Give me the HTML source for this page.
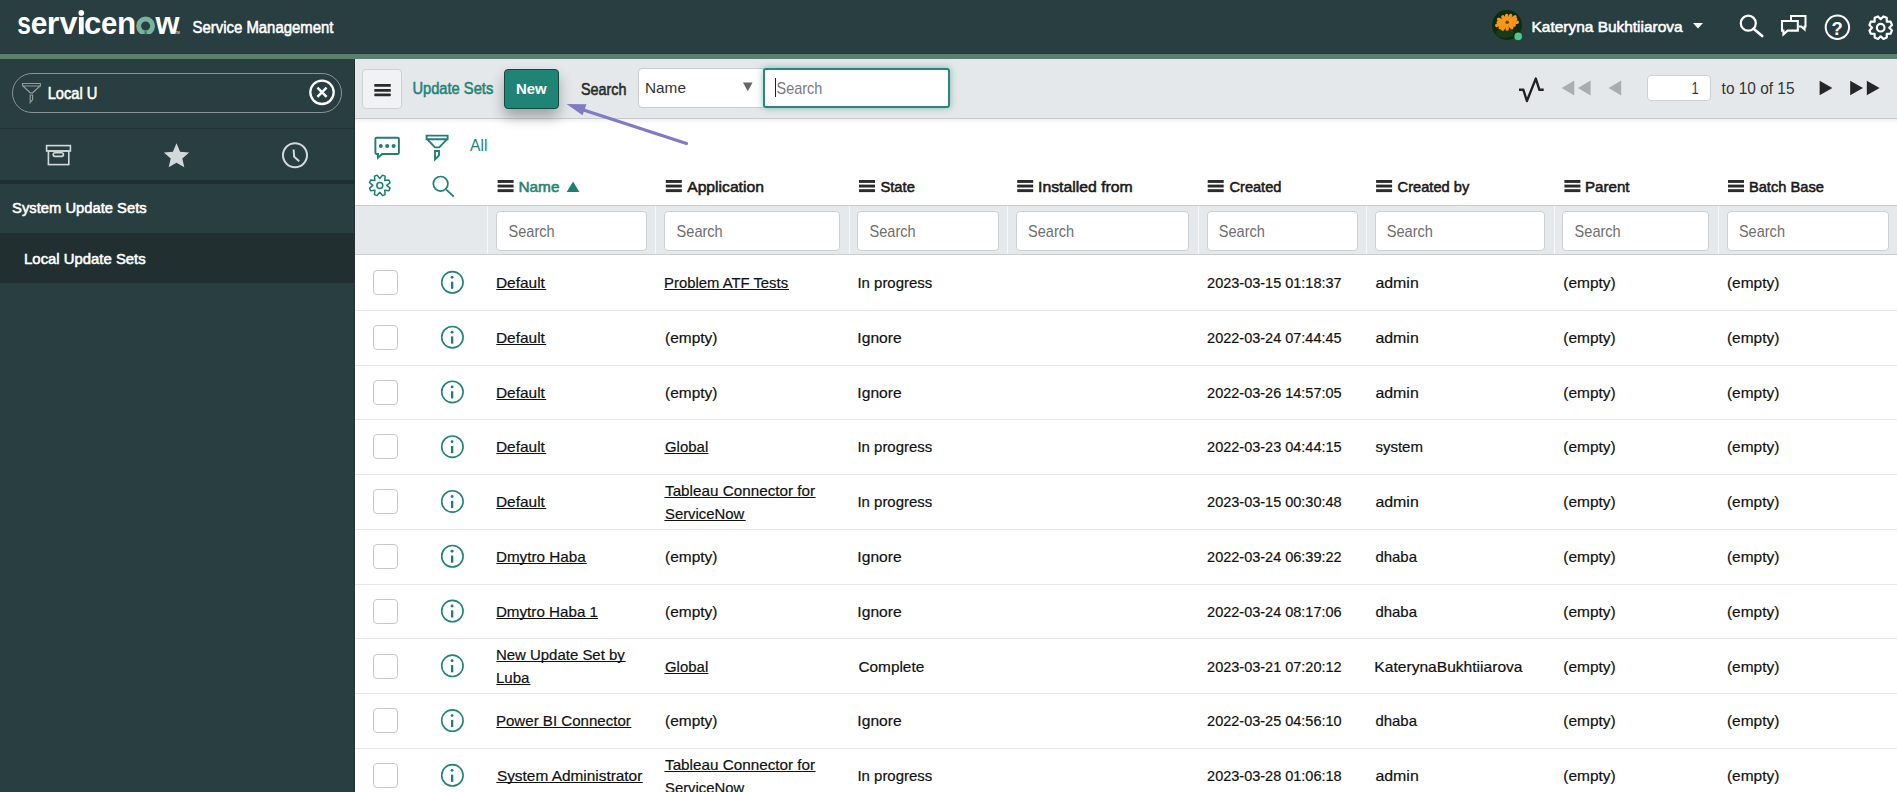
<!DOCTYPE html>
<html><head><meta charset="utf-8"><title>Update Sets | ServiceNow</title>
<style>
html,body{margin:0;padding:0;}
body{width:1897px;height:792px;overflow:hidden;position:relative;background:#fff;font-family:"Liberation Sans",sans-serif;}
.a{position:absolute;box-sizing:border-box;}
svg.txt,svg.ico{position:absolute;left:0;top:0;font-family:"Liberation Sans",sans-serif;}

</style></head>
<body>
<header>
<div class="a" style="left:0px;top:0px;width:1897px;height:54px;background:#293e40"></div>
<div class="a" style="left:0px;top:53px;width:1897px;height:1px;background:#253739"></div>
<div class="a" style="left:0px;top:54px;width:1897px;height:5px;background:#5b8070"></div>
</header>
<nav>
<div class="a" style="left:0px;top:59px;width:355px;height:733px;background:#293e40"></div>
<div class="a" style="left:354px;top:59px;width:1px;height:733px;background:#223234"></div>
<div class="a" style="left:12px;top:73px;width:330px;height:40px;border:1px solid #8a9496;border-radius:20px"></div>
<div class="a" style="left:0px;top:128px;width:355px;height:1px;background:#223335"></div>
<div class="a" style="left:0px;top:180px;width:355px;height:4px;background:#1f2e30"></div>
<div class="a" style="left:0px;top:233px;width:355px;height:50px;background:#212f31"></div>
</nav>
<main>
<div class="a" style="left:355px;top:59px;width:1542px;height:59px;background:#e4e8eb"></div>
<div class="a" style="left:355px;top:118px;width:1542px;height:1px;background:#c8c9ca"></div>
<div class="a" style="left:355px;top:119px;width:1542px;height:5px;background:linear-gradient(#f2f2f2,#ffffff)"></div>
<div class="a" style="left:362px;top:69px;width:40px;height:40px;background:#f1f2f4;border:1px solid #cdd1d4;border-radius:4px"></div>
<div class="a" style="left:504px;top:69px;width:55px;height:40px;background:#1f8476;border:1px solid #15493f;border-radius:4px;box-shadow:0 8px 14px rgba(0,0,0,.3)"></div>
<div class="a" style="left:638px;top:68px;width:126px;height:40px;background:#fff;border:1px solid #c8ccd0;border-radius:4px 0 0 4px"></div>
<div class="a" style="left:763px;top:68px;width:187px;height:40px;background:#fff;border:2px solid #28897b;border-radius:3px;box-shadow:0 0 7px rgba(31,132,118,.5)"></div>
<div class="a" style="left:775px;top:78px;width:1px;height:19px;background:#222"></div>
<div class="a" style="left:1647px;top:75px;width:64px;height:26px;background:#fff;border:1px solid #cdd1d4;border-radius:4px"></div>
<div class="a" style="left:355px;top:205px;width:1542px;height:1px;background:#c8ccd0"></div>
<div class="a" style="left:355px;top:206px;width:1542px;height:48px;background:#e6e9eb"></div>
<div class="a" style="left:355px;top:254px;width:1542px;height:1px;background:#c8ccd0"></div>
<div class="a" style="left:487.0px;top:206px;width:1px;height:48px;background:#f7f8f9"></div>
<div class="a" style="left:655.0px;top:206px;width:1px;height:48px;background:#f7f8f9"></div>
<div class="a" style="left:849.0px;top:206px;width:1px;height:48px;background:#f7f8f9"></div>
<div class="a" style="left:1007.0px;top:206px;width:1px;height:48px;background:#f7f8f9"></div>
<div class="a" style="left:1198.0px;top:206px;width:1px;height:48px;background:#f7f8f9"></div>
<div class="a" style="left:1365.5px;top:206px;width:1px;height:48px;background:#f7f8f9"></div>
<div class="a" style="left:1554.0px;top:206px;width:1px;height:48px;background:#f7f8f9"></div>
<div class="a" style="left:1717.5px;top:206px;width:1px;height:48px;background:#f7f8f9"></div>
<div class="a" style="left:496.3px;top:211px;width:151.09999999999997px;height:40px;background:#fff;border:1px solid #cdd0d3;border-radius:4px"></div>
<div class="a" style="left:664.4px;top:211px;width:175.89999999999998px;height:40px;background:#fff;border:1px solid #cdd0d3;border-radius:4px"></div>
<div class="a" style="left:857.3px;top:211px;width:141.30000000000007px;height:40px;background:#fff;border:1px solid #cdd0d3;border-radius:4px"></div>
<div class="a" style="left:1015.8px;top:211px;width:173.29999999999995px;height:40px;background:#fff;border:1px solid #cdd0d3;border-radius:4px"></div>
<div class="a" style="left:1206.6px;top:211px;width:151.10000000000014px;height:40px;background:#fff;border:1px solid #cdd0d3;border-radius:4px"></div>
<div class="a" style="left:1374.6px;top:211px;width:170.70000000000005px;height:40px;background:#fff;border:1px solid #cdd0d3;border-radius:4px"></div>
<div class="a" style="left:1562.4px;top:211px;width:146.89999999999986px;height:40px;background:#fff;border:1px solid #cdd0d3;border-radius:4px"></div>
<div class="a" style="left:1726.7px;top:211px;width:162.5999999999999px;height:40px;background:#fff;border:1px solid #cdd0d3;border-radius:4px"></div>
<div class="a" style="left:355px;top:309.78px;width:1542px;height:1px;background:#e8e8e8"></div>
<div class="a" style="left:355px;top:364.56px;width:1542px;height:1px;background:#e8e8e8"></div>
<div class="a" style="left:355px;top:419.34px;width:1542px;height:1px;background:#e8e8e8"></div>
<div class="a" style="left:355px;top:474.12px;width:1542px;height:1px;background:#e8e8e8"></div>
<div class="a" style="left:355px;top:528.9px;width:1542px;height:1px;background:#e8e8e8"></div>
<div class="a" style="left:355px;top:583.68px;width:1542px;height:1px;background:#e8e8e8"></div>
<div class="a" style="left:355px;top:638.46px;width:1542px;height:1px;background:#e8e8e8"></div>
<div class="a" style="left:355px;top:693.24px;width:1542px;height:1px;background:#e8e8e8"></div>
<div class="a" style="left:355px;top:748.02px;width:1542px;height:1px;background:#e8e8e8"></div>
<div class="a" style="left:373px;top:270.0px;width:25px;height:25px;border:1.5px solid #c9c9c9;border-radius:4px;background:#fff"></div>
<div class="a" style="left:373px;top:324.8px;width:25px;height:25px;border:1.5px solid #c9c9c9;border-radius:4px;background:#fff"></div>
<div class="a" style="left:373px;top:379.6px;width:25px;height:25px;border:1.5px solid #c9c9c9;border-radius:4px;background:#fff"></div>
<div class="a" style="left:373px;top:434.3px;width:25px;height:25px;border:1.5px solid #c9c9c9;border-radius:4px;background:#fff"></div>
<div class="a" style="left:373px;top:489.1px;width:25px;height:25px;border:1.5px solid #c9c9c9;border-radius:4px;background:#fff"></div>
<div class="a" style="left:373px;top:543.9px;width:25px;height:25px;border:1.5px solid #c9c9c9;border-radius:4px;background:#fff"></div>
<div class="a" style="left:373px;top:598.7px;width:25px;height:25px;border:1.5px solid #c9c9c9;border-radius:4px;background:#fff"></div>
<div class="a" style="left:373px;top:653.5px;width:25px;height:25px;border:1.5px solid #c9c9c9;border-radius:4px;background:#fff"></div>
<div class="a" style="left:373px;top:708.2px;width:25px;height:25px;border:1.5px solid #c9c9c9;border-radius:4px;background:#fff"></div>
<div class="a" style="left:373px;top:763.0px;width:25px;height:25px;border:1.5px solid #c9c9c9;border-radius:4px;background:#fff"></div>
</main>
<svg class="ico" width="1897" height="792" viewBox="0 0 1897 792">
<defs><clipPath id="oc"><rect x="130" y="10" width="30" height="24.1"/></clipPath></defs>
<circle cx="145.6" cy="26.0" r="6.95" fill="none" stroke="#78b39d" stroke-width="4.9" clip-path="url(#oc)"/>
<rect x="144.4" y="31.2" width="2.4" height="3" fill="#4a7868"/>
<rect x="78.9" y="17.1" width="4.8" height="17" fill="#fff"/>
<circle cx="81.3" cy="12.9" r="2.8" fill="#fff"/>
<text x="175.5" y="34" font-size="3" fill="#fff">TM</text>
<defs><clipPath id="av"><circle cx="1507" cy="25" r="15"/></clipPath></defs>
<circle cx="1507" cy="25" r="14.9" fill="#0e2b10"/>
<g clip-path="url(#av)">
<ellipse cx="1505" cy="33" rx="9" ry="5" fill="#163d17"/>
<line x1="1507" y1="22.3" x2="1517.3" y2="22.2" stroke="#f7961c" stroke-width="3.4" stroke-linecap="round"/>
<line x1="1507" y1="22.3" x2="1514.2" y2="25.2" stroke="#f7961c" stroke-width="3.4" stroke-linecap="round"/>
<line x1="1507" y1="22.3" x2="1511.8" y2="27.7" stroke="#f7961c" stroke-width="3.4" stroke-linecap="round"/>
<line x1="1507" y1="22.3" x2="1507.2" y2="29.1" stroke="#f7961c" stroke-width="3.4" stroke-linecap="round"/>
<line x1="1507" y1="22.3" x2="1502.7" y2="29.1" stroke="#f7961c" stroke-width="3.4" stroke-linecap="round"/>
<line x1="1507" y1="22.3" x2="1500.1" y2="27.8" stroke="#f7961c" stroke-width="3.4" stroke-linecap="round"/>
<line x1="1507" y1="22.3" x2="1496.8" y2="25.4" stroke="#f7961c" stroke-width="3.4" stroke-linecap="round"/>
<line x1="1507" y1="22.3" x2="1498.2" y2="22.4" stroke="#f7961c" stroke-width="3.4" stroke-linecap="round"/>
<line x1="1507" y1="22.3" x2="1498.6" y2="19.4" stroke="#f7961c" stroke-width="3.4" stroke-linecap="round"/>
<line x1="1507" y1="22.3" x2="1502.9" y2="16.9" stroke="#f7961c" stroke-width="3.4" stroke-linecap="round"/>
<line x1="1507" y1="22.3" x2="1506.7" y2="15.5" stroke="#f7961c" stroke-width="3.4" stroke-linecap="round"/>
<line x1="1507" y1="22.3" x2="1510.7" y2="15.5" stroke="#f7961c" stroke-width="3.4" stroke-linecap="round"/>
<line x1="1507" y1="22.3" x2="1515.0" y2="16.8" stroke="#f7961c" stroke-width="3.4" stroke-linecap="round"/>
<line x1="1507" y1="22.3" x2="1515.7" y2="19.2" stroke="#f7961c" stroke-width="3.4" stroke-linecap="round"/>
<circle cx="1507" cy="22.3" r="4" fill="#f59a12"/>
<circle cx="1507.2" cy="22.3" r="1.8" fill="#7a3a0c"/>
</g>
<circle cx="1518.2" cy="36.4" r="3.8" fill="#4fc58a"/>
<polygon points="1693,23 1703,23 1698,28.5" fill="#fff"/>
<g fill="none" stroke="#fff" stroke-width="2">
<circle cx="1748.3" cy="23.2" r="7.5" stroke-width="2.2"/>
<line x1="1753.6" y1="28.8" x2="1762.2" y2="36.0" stroke-width="2.7" stroke-linecap="round"/>
<path d="M1791 20 V16 H1805.5 V26.5 H1804.6 V29.6 L1801.2 26.5 H1799"/>
<path d="M1782 21 H1797.8 V30.6 H1787.6 L1783.4 34.4 V30.6 H1782 Z" stroke-width="2.1"/>
<circle cx="1837.4" cy="27.3" r="11.7"/>
</g>
<text x="1831.6" y="34.6" font-size="18.5" font-weight="bold" fill="#fff">?</text>
<polygon points="1880.70,19.10 1883.41,16.42 1886.76,17.81 1886.78,21.62 1890.59,21.64 1891.98,24.99 1889.30,27.70 1891.98,30.41 1890.59,33.76 1886.78,33.78 1886.76,37.59 1883.41,38.98 1880.70,36.30 1877.99,38.98 1874.64,37.59 1874.62,33.78 1870.81,33.76 1869.42,30.41 1872.10,27.70 1869.42,24.99 1870.81,21.64 1874.62,21.62 1874.64,17.81 1877.99,16.42" fill="none" stroke="#fff" stroke-width="2.2" stroke-linejoin="round"/><circle cx="1880.7" cy="27.7" r="3.8" fill="none" stroke="#fff" stroke-width="2.2"/>
<g fill="none" stroke="#d3d8da" stroke-width="1.6">
<rect x="46.6" y="145.6" width="23.8" height="5.4"/>
<rect x="48.4" y="151" width="20.4" height="13.6"/>
<rect x="53.2" y="152.8" width="10.2" height="3.6" rx="1.8"/>
<circle cx="295" cy="155.3" r="12" stroke-width="2"/>
<polyline points="293.6,149.5 294.2,156.8 299.2,161.2" stroke-width="2"/>
</g>
<polygon points="176.50,143.30 180.09,151.66 189.15,152.49 182.30,158.49 184.32,167.36 176.50,162.70 168.68,167.36 170.70,158.49 163.85,152.49 172.91,151.66" fill="#d3d8da"/>
<g fill="none" stroke="#8f9a9c" stroke-width="1.2">
<path d="M22.6 83.5 H40.4 V86 H22.6 Z M23 86 L30.2 92.8 H32.6 L40 86"/>
<path d="M30.2 95 H32.6 V99.6 L30.2 102.6 Z"/>
</g>
<circle cx="322" cy="92.3" r="11.7" fill="none" stroke="#fff" stroke-width="2.3"/>
<path d="M317.4 87.7 L326.6 96.9 M326.6 87.7 L317.4 96.9" stroke="#fff" stroke-width="2.5"/>
<g fill="#2b2b2b"><rect x="374.3" y="84" width="16.5" height="2.8" rx="0.6"/><rect x="374.3" y="89" width="16.5" height="2.8" rx="0.6"/><rect x="374.3" y="93.4" width="16.5" height="2.8" rx="0.6"/></g>
<line x1="686.5" y1="143.5" x2="579" y2="108.6" stroke="#7f7bc4" stroke-width="3.2" stroke-linecap="round"/>
<polygon points="566.5,104 586.5,104.3 582.5,115.3" fill="#7f7bc4"/>
<polygon points="743,82.6 752.6,82.6 747.8,91.3" fill="#666"/>
<polyline points="1519,89.8 1523.4,89.8 1526.9,101 1535.8,78.6 1539.4,89.8 1543.7,89.8" fill="none" stroke="#222" stroke-width="2.4" stroke-linejoin="round"/>
<g fill="#a9adb0">
<polygon points="1561.7,88 1574.3,80.6 1574.3,95.4"/>
<polygon points="1578.0,88 1590.6,80.6 1590.6,95.4"/>
<polygon points="1608.6,88 1621.1999999999998,80.6 1621.1999999999998,95.4"/>
</g><g fill="#262626">
<polygon points="1819.6,80.8 1832.3999999999999,88 1819.6,95.3"/>
<polygon points="1850.2,80.8 1863.0,88 1850.2,95.3"/>
<polygon points="1866.8,80.8 1879.6,88 1866.8,95.3"/>
</g>
<g fill="none" stroke="#1f7f73" stroke-width="1.9">
<path d="M376.5 137.8 H397.8 Q398.9 137.8 398.9 139 V152.8 Q398.9 154 397.8 154 H382.2 L378 157.6 V154 H376.5 Q375.4 154 375.4 152.8 V139 Q375.4 137.8 376.5 137.8 Z"/>
<path d="M426.6 135.6 H447.6 V139.2 H426.6 Z M427 139.2 L435 147.4 H439.2 L447.2 139.2"/>
<path d="M435 151 H439 V155.4 L435 159.4 Z"/>
<circle cx="440.6" cy="183.8" r="7.3" stroke-width="1.7"/>
<line x1="446.2" y1="189.6" x2="453.8" y2="196.6" stroke-width="1.9"/>
</g>
<g fill="#1f7f73"><circle cx="380.8" cy="145.9" r="2"/><circle cx="387.2" cy="145.9" r="2"/><circle cx="393.6" cy="145.9" r="2"/></g>
<polygon points="379.80,178.50 382.52,175.15 385.12,176.23 384.68,180.52 388.97,180.08 390.05,182.68 386.70,185.40 390.05,188.12 388.97,190.72 384.68,190.28 385.12,194.57 382.52,195.65 379.80,192.30 377.08,195.65 374.48,194.57 374.92,190.28 370.63,190.72 369.55,188.12 372.90,185.40 369.55,182.68 370.63,180.08 374.92,180.52 374.48,176.23 377.08,175.15" fill="none" stroke="#1f7f73" stroke-width="1.5" stroke-linejoin="round"/><circle cx="379.8" cy="185.4" r="3.0" fill="none" stroke="#1f7f73" stroke-width="1.5"/>
<g fill="#2b2b2b">
<rect x="497.6" y="180" width="16" height="2.9"/><rect x="497.6" y="184.6" width="16" height="2.9"/><rect x="497.6" y="189.2" width="16" height="2.9"/>
<rect x="665.8" y="180" width="16" height="2.9"/><rect x="665.8" y="184.6" width="16" height="2.9"/><rect x="665.8" y="189.2" width="16" height="2.9"/>
<rect x="859.0" y="180" width="16" height="2.9"/><rect x="859.0" y="184.6" width="16" height="2.9"/><rect x="859.0" y="189.2" width="16" height="2.9"/>
<rect x="1017.2" y="180" width="16" height="2.9"/><rect x="1017.2" y="184.6" width="16" height="2.9"/><rect x="1017.2" y="189.2" width="16" height="2.9"/>
<rect x="1207.7" y="180" width="16" height="2.9"/><rect x="1207.7" y="184.6" width="16" height="2.9"/><rect x="1207.7" y="189.2" width="16" height="2.9"/>
<rect x="1376.1" y="180" width="16" height="2.9"/><rect x="1376.1" y="184.6" width="16" height="2.9"/><rect x="1376.1" y="189.2" width="16" height="2.9"/>
<rect x="1564.4" y="180" width="16" height="2.9"/><rect x="1564.4" y="184.6" width="16" height="2.9"/><rect x="1564.4" y="189.2" width="16" height="2.9"/>
<rect x="1728.0" y="180" width="16" height="2.9"/><rect x="1728.0" y="184.6" width="16" height="2.9"/><rect x="1728.0" y="189.2" width="16" height="2.9"/>
</g>
<polygon points="566.7,191.9 579.4,191.9 573.05,181.5" fill="#1f7f73"/>
<circle cx="452.4" cy="282.35" r="10.7" fill="none" stroke="#1f8476" stroke-width="1.6"/>
<circle cx="452.1" cy="277.35" r="1.45" fill="#1f7f73"/>
<rect x="451.0" y="281.65" width="2.3" height="7.2" fill="#1f7f73"/>
<circle cx="452.4" cy="337.13" r="10.7" fill="none" stroke="#1f8476" stroke-width="1.6"/>
<circle cx="452.1" cy="332.13" r="1.45" fill="#1f7f73"/>
<rect x="451.0" y="336.43" width="2.3" height="7.2" fill="#1f7f73"/>
<circle cx="452.4" cy="391.91" r="10.7" fill="none" stroke="#1f8476" stroke-width="1.6"/>
<circle cx="452.1" cy="386.91" r="1.45" fill="#1f7f73"/>
<rect x="451.0" y="391.21" width="2.3" height="7.2" fill="#1f7f73"/>
<circle cx="452.4" cy="446.69" r="10.7" fill="none" stroke="#1f8476" stroke-width="1.6"/>
<circle cx="452.1" cy="441.69" r="1.45" fill="#1f7f73"/>
<rect x="451.0" y="445.99" width="2.3" height="7.2" fill="#1f7f73"/>
<circle cx="452.4" cy="501.47" r="10.7" fill="none" stroke="#1f8476" stroke-width="1.6"/>
<circle cx="452.1" cy="496.47" r="1.45" fill="#1f7f73"/>
<rect x="451.0" y="500.77" width="2.3" height="7.2" fill="#1f7f73"/>
<circle cx="452.4" cy="556.25" r="10.7" fill="none" stroke="#1f8476" stroke-width="1.6"/>
<circle cx="452.1" cy="551.25" r="1.45" fill="#1f7f73"/>
<rect x="451.0" y="555.55" width="2.3" height="7.2" fill="#1f7f73"/>
<circle cx="452.4" cy="611.03" r="10.7" fill="none" stroke="#1f8476" stroke-width="1.6"/>
<circle cx="452.1" cy="606.03" r="1.45" fill="#1f7f73"/>
<rect x="451.0" y="610.33" width="2.3" height="7.2" fill="#1f7f73"/>
<circle cx="452.4" cy="665.81" r="10.7" fill="none" stroke="#1f8476" stroke-width="1.6"/>
<circle cx="452.1" cy="660.81" r="1.45" fill="#1f7f73"/>
<rect x="451.0" y="665.11" width="2.3" height="7.2" fill="#1f7f73"/>
<circle cx="452.4" cy="720.59" r="10.7" fill="none" stroke="#1f8476" stroke-width="1.6"/>
<circle cx="452.1" cy="715.59" r="1.45" fill="#1f7f73"/>
<rect x="451.0" y="719.89" width="2.3" height="7.2" fill="#1f7f73"/>
<circle cx="452.4" cy="775.37" r="10.7" fill="none" stroke="#1f8476" stroke-width="1.6"/>
<circle cx="452.1" cy="770.37" r="1.45" fill="#1f7f73"/>
<rect x="451.0" y="774.67" width="2.3" height="7.2" fill="#1f7f73"/>
</svg>
<svg class="txt" width="1897" height="792" viewBox="0 0 1897 792">
<text x="17.21" y="33.90" font-size="31.40" font-weight="bold" fill="#ffffff" textLength="13.74" lengthAdjust="spacingAndGlyphs">s</text>
<text x="30.64" y="33.90" font-size="31.40" font-weight="bold" fill="#ffffff" textLength="16.69" lengthAdjust="spacingAndGlyphs">e</text>
<text x="46.74" y="33.90" font-size="31.40" font-weight="bold" fill="#ffffff" textLength="12.58" lengthAdjust="spacingAndGlyphs">r</text>
<text x="59.50" y="33.90" font-size="31.40" font-weight="bold" fill="#ffffff" textLength="18.03" lengthAdjust="spacingAndGlyphs">v</text>
<text x="84.11" y="33.90" font-size="31.40" font-weight="bold" fill="#ffffff" textLength="17.34" lengthAdjust="spacingAndGlyphs">c</text>
<text x="101.06" y="33.90" font-size="31.40" font-weight="bold" fill="#ffffff" textLength="16.36" lengthAdjust="spacingAndGlyphs">e</text>
<text x="117.00" y="33.90" font-size="31.40" font-weight="bold" fill="#ffffff" textLength="19.17" lengthAdjust="spacingAndGlyphs">n</text>
<text x="155.38" y="33.90" font-size="31.40" font-weight="bold" fill="#ffffff" textLength="23.94" lengthAdjust="spacingAndGlyphs">w</text>
<text x="192.50" y="32.80" font-size="16.28" font-weight="normal" fill="#ffffff" textLength="140.99" lengthAdjust="spacingAndGlyphs" stroke="#ffffff" stroke-width="0.55">Service Management</text>
<text x="1531.58" y="31.80" font-size="15.41" font-weight="normal" fill="#ffffff" textLength="151.02" lengthAdjust="spacingAndGlyphs" stroke="#ffffff" stroke-width="0.55">Kateryna Bukhtiiarova</text>
<text x="47.64" y="98.90" font-size="15.99" font-weight="normal" fill="#ffffff" textLength="49.82" lengthAdjust="spacingAndGlyphs" stroke="#ffffff" stroke-width="0.55">Local U</text>
<text x="12.10" y="212.60" font-size="15.26" font-weight="normal" fill="#ffffff" textLength="134.54" lengthAdjust="spacingAndGlyphs" stroke="#ffffff" stroke-width="0.55">System Update Sets</text>
<text x="24.09" y="263.60" font-size="15.41" font-weight="normal" fill="#ffffff" textLength="121.62" lengthAdjust="spacingAndGlyphs" stroke="#ffffff" stroke-width="0.55">Local Update Sets</text>
<text x="412.40" y="94.20" font-size="15.99" font-weight="normal" fill="#1f8476" textLength="80.90" lengthAdjust="spacingAndGlyphs" stroke="#1f8476" stroke-width="0.55">Update Sets</text>
<text x="516.02" y="93.90" font-size="15.26" font-weight="bold" fill="#ffffff" textLength="30.64" lengthAdjust="spacingAndGlyphs">New</text>
<text x="581.00" y="94.80" font-size="15.70" font-weight="normal" fill="#2b2b2b" textLength="45.51" lengthAdjust="spacingAndGlyphs" stroke="#2b2b2b" stroke-width="0.55">Search</text>
<text x="645.01" y="93.00" font-size="15.55" font-weight="normal" fill="#333333" textLength="40.92" lengthAdjust="spacingAndGlyphs">Name</text>
<text x="776.50" y="94.00" font-size="15.99" font-weight="normal" fill="#7a7a7a" textLength="45.80" lengthAdjust="spacingAndGlyphs">Search</text>
<text x="1691.39" y="93.90" font-size="15.84" font-weight="normal" fill="#2e3d49" textLength="7.15" lengthAdjust="spacingAndGlyphs">1</text>
<text x="1721.60" y="94.20" font-size="16.72" font-weight="normal" fill="#333333" textLength="72.87" lengthAdjust="spacingAndGlyphs">to 10 of 15</text>
<text x="470.00" y="151.00" font-size="16.57" font-weight="normal" fill="#1f8476" textLength="17.44" lengthAdjust="spacingAndGlyphs">All</text>
<text x="518.40" y="191.90" font-size="15.12" font-weight="normal" fill="#1f8476" textLength="41.10" lengthAdjust="spacingAndGlyphs" stroke="#1f8476" stroke-width="0.55">Name</text>
<text x="687.20" y="191.90" font-size="15.12" font-weight="normal" fill="#1a1a1a" textLength="76.71" lengthAdjust="spacingAndGlyphs" stroke="#1a1a1a" stroke-width="0.55">Application</text>
<text x="880.40" y="191.90" font-size="15.12" font-weight="normal" fill="#1a1a1a" textLength="34.48" lengthAdjust="spacingAndGlyphs" stroke="#1a1a1a" stroke-width="0.55">State</text>
<text x="1038.04" y="191.90" font-size="15.12" font-weight="normal" fill="#1a1a1a" textLength="94.67" lengthAdjust="spacingAndGlyphs" stroke="#1a1a1a" stroke-width="0.55">Installed from</text>
<text x="1229.50" y="191.90" font-size="15.12" font-weight="normal" fill="#1a1a1a" textLength="51.91" lengthAdjust="spacingAndGlyphs" stroke="#1a1a1a" stroke-width="0.55">Created</text>
<text x="1397.60" y="191.90" font-size="15.12" font-weight="normal" fill="#1a1a1a" textLength="71.65" lengthAdjust="spacingAndGlyphs" stroke="#1a1a1a" stroke-width="0.55">Created by</text>
<text x="1584.95" y="191.90" font-size="15.12" font-weight="normal" fill="#1a1a1a" textLength="44.58" lengthAdjust="spacingAndGlyphs" stroke="#1a1a1a" stroke-width="0.55">Parent</text>
<text x="1748.89" y="191.90" font-size="15.12" font-weight="normal" fill="#1a1a1a" textLength="75.08" lengthAdjust="spacingAndGlyphs" stroke="#1a1a1a" stroke-width="0.55">Batch Base</text>
<text x="508.50" y="236.90" font-size="15.99" font-weight="normal" fill="#6e6e6e" textLength="46.10" lengthAdjust="spacingAndGlyphs">Search</text>
<text x="676.60" y="236.90" font-size="15.99" font-weight="normal" fill="#6e6e6e" textLength="46.10" lengthAdjust="spacingAndGlyphs">Search</text>
<text x="869.50" y="236.90" font-size="15.99" font-weight="normal" fill="#6e6e6e" textLength="46.10" lengthAdjust="spacingAndGlyphs">Search</text>
<text x="1028.00" y="236.90" font-size="15.99" font-weight="normal" fill="#6e6e6e" textLength="46.10" lengthAdjust="spacingAndGlyphs">Search</text>
<text x="1218.80" y="236.90" font-size="15.99" font-weight="normal" fill="#6e6e6e" textLength="46.10" lengthAdjust="spacingAndGlyphs">Search</text>
<text x="1386.80" y="236.90" font-size="15.99" font-weight="normal" fill="#6e6e6e" textLength="46.10" lengthAdjust="spacingAndGlyphs">Search</text>
<text x="1574.60" y="236.90" font-size="15.99" font-weight="normal" fill="#6e6e6e" textLength="46.10" lengthAdjust="spacingAndGlyphs">Search</text>
<text x="1738.90" y="236.90" font-size="15.99" font-weight="normal" fill="#6e6e6e" textLength="46.10" lengthAdjust="spacingAndGlyphs">Search</text>
<text x="495.90" y="288.10" font-size="15.41" font-weight="normal" fill="#111111" textLength="48.98" lengthAdjust="spacingAndGlyphs" stroke="#111111" stroke-width="0.2">Default</text>
<rect x="496.30" y="289" width="49.90" height="1" fill="#111111"/>
<text x="664.04" y="288.10" font-size="15.41" font-weight="normal" fill="#111111" textLength="124.07" lengthAdjust="spacingAndGlyphs" stroke="#111111" stroke-width="0.2">Problem ATF Tests</text>
<rect x="664.40" y="289" width="124.60" height="1" fill="#111111"/>
<text x="857.43" y="288.10" font-size="15.41" font-weight="normal" fill="#111111" textLength="74.88" lengthAdjust="spacingAndGlyphs" stroke="#111111" stroke-width="0.2">In progress</text>
<text x="1207.10" y="288.10" font-size="15.41" font-weight="normal" fill="#111111" textLength="134.53" lengthAdjust="spacingAndGlyphs" stroke="#111111" stroke-width="0.2">2023-03-15 01:18:37</text>
<text x="1375.40" y="288.10" font-size="15.41" font-weight="normal" fill="#111111" textLength="43.38" lengthAdjust="spacingAndGlyphs" stroke="#111111" stroke-width="0.2">admin</text>
<text x="1563.30" y="288.10" font-size="15.41" font-weight="normal" fill="#111111" textLength="52.43" lengthAdjust="spacingAndGlyphs" stroke="#111111" stroke-width="0.2">(empty)</text>
<text x="1726.90" y="288.10" font-size="15.41" font-weight="normal" fill="#111111" textLength="52.43" lengthAdjust="spacingAndGlyphs" stroke="#111111" stroke-width="0.2">(empty)</text>
<text x="495.90" y="342.70" font-size="15.41" font-weight="normal" fill="#111111" textLength="48.98" lengthAdjust="spacingAndGlyphs" stroke="#111111" stroke-width="0.2">Default</text>
<rect x="496.30" y="344" width="49.90" height="1" fill="#111111"/>
<text x="665.00" y="342.70" font-size="15.41" font-weight="normal" fill="#111111" textLength="52.43" lengthAdjust="spacingAndGlyphs" stroke="#111111" stroke-width="0.2">(empty)</text>
<text x="857.39" y="342.70" font-size="15.41" font-weight="normal" fill="#111111" textLength="44.28" lengthAdjust="spacingAndGlyphs" stroke="#111111" stroke-width="0.2">Ignore</text>
<text x="1207.10" y="342.70" font-size="15.41" font-weight="normal" fill="#111111" textLength="134.53" lengthAdjust="spacingAndGlyphs" stroke="#111111" stroke-width="0.2">2022-03-24 07:44:45</text>
<text x="1375.40" y="342.70" font-size="15.41" font-weight="normal" fill="#111111" textLength="43.38" lengthAdjust="spacingAndGlyphs" stroke="#111111" stroke-width="0.2">admin</text>
<text x="1563.30" y="342.70" font-size="15.41" font-weight="normal" fill="#111111" textLength="52.43" lengthAdjust="spacingAndGlyphs" stroke="#111111" stroke-width="0.2">(empty)</text>
<text x="1726.90" y="342.70" font-size="15.41" font-weight="normal" fill="#111111" textLength="52.43" lengthAdjust="spacingAndGlyphs" stroke="#111111" stroke-width="0.2">(empty)</text>
<text x="495.90" y="397.90" font-size="15.41" font-weight="normal" fill="#111111" textLength="48.98" lengthAdjust="spacingAndGlyphs" stroke="#111111" stroke-width="0.2">Default</text>
<rect x="496.30" y="399" width="49.90" height="1" fill="#111111"/>
<text x="665.00" y="397.90" font-size="15.41" font-weight="normal" fill="#111111" textLength="52.43" lengthAdjust="spacingAndGlyphs" stroke="#111111" stroke-width="0.2">(empty)</text>
<text x="857.39" y="397.90" font-size="15.41" font-weight="normal" fill="#111111" textLength="44.28" lengthAdjust="spacingAndGlyphs" stroke="#111111" stroke-width="0.2">Ignore</text>
<text x="1207.10" y="397.90" font-size="15.41" font-weight="normal" fill="#111111" textLength="134.53" lengthAdjust="spacingAndGlyphs" stroke="#111111" stroke-width="0.2">2022-03-26 14:57:05</text>
<text x="1375.40" y="397.90" font-size="15.41" font-weight="normal" fill="#111111" textLength="43.38" lengthAdjust="spacingAndGlyphs" stroke="#111111" stroke-width="0.2">admin</text>
<text x="1563.30" y="397.90" font-size="15.41" font-weight="normal" fill="#111111" textLength="52.43" lengthAdjust="spacingAndGlyphs" stroke="#111111" stroke-width="0.2">(empty)</text>
<text x="1726.90" y="397.90" font-size="15.41" font-weight="normal" fill="#111111" textLength="52.43" lengthAdjust="spacingAndGlyphs" stroke="#111111" stroke-width="0.2">(empty)</text>
<text x="495.90" y="452.30" font-size="15.41" font-weight="normal" fill="#111111" textLength="48.98" lengthAdjust="spacingAndGlyphs" stroke="#111111" stroke-width="0.2">Default</text>
<rect x="496.30" y="453" width="49.90" height="1" fill="#111111"/>
<text x="665.00" y="452.30" font-size="15.41" font-weight="normal" fill="#111111" textLength="43.21" lengthAdjust="spacingAndGlyphs" stroke="#111111" stroke-width="0.2">Global</text>
<rect x="664.40" y="453" width="44.00" height="1" fill="#111111"/>
<text x="857.43" y="452.30" font-size="15.41" font-weight="normal" fill="#111111" textLength="74.88" lengthAdjust="spacingAndGlyphs" stroke="#111111" stroke-width="0.2">In progress</text>
<text x="1207.10" y="452.30" font-size="15.41" font-weight="normal" fill="#111111" textLength="134.53" lengthAdjust="spacingAndGlyphs" stroke="#111111" stroke-width="0.2">2022-03-23 04:44:15</text>
<text x="1375.40" y="452.30" font-size="15.41" font-weight="normal" fill="#111111" textLength="47.60" lengthAdjust="spacingAndGlyphs" stroke="#111111" stroke-width="0.2">system</text>
<text x="1563.30" y="452.30" font-size="15.41" font-weight="normal" fill="#111111" textLength="52.43" lengthAdjust="spacingAndGlyphs" stroke="#111111" stroke-width="0.2">(empty)</text>
<text x="1726.90" y="452.30" font-size="15.41" font-weight="normal" fill="#111111" textLength="52.43" lengthAdjust="spacingAndGlyphs" stroke="#111111" stroke-width="0.2">(empty)</text>
<text x="495.90" y="507.30" font-size="15.41" font-weight="normal" fill="#111111" textLength="48.98" lengthAdjust="spacingAndGlyphs" stroke="#111111" stroke-width="0.2">Default</text>
<rect x="496.30" y="508" width="49.90" height="1" fill="#111111"/>
<text x="665.00" y="495.85" font-size="15.41" font-weight="normal" fill="#111111" textLength="150.12" lengthAdjust="spacingAndGlyphs" stroke="#111111" stroke-width="0.2">Tableau Connector for</text>
<rect x="664.40" y="497" width="151.20" height="1" fill="#111111"/>
<text x="665.00" y="518.75" font-size="15.41" font-weight="normal" fill="#111111" textLength="79.25" lengthAdjust="spacingAndGlyphs" stroke="#111111" stroke-width="0.2">ServiceNow</text>
<rect x="664.40" y="520" width="81.30" height="1" fill="#111111"/>
<text x="857.43" y="507.30" font-size="15.41" font-weight="normal" fill="#111111" textLength="74.88" lengthAdjust="spacingAndGlyphs" stroke="#111111" stroke-width="0.2">In progress</text>
<text x="1207.10" y="507.30" font-size="15.41" font-weight="normal" fill="#111111" textLength="134.53" lengthAdjust="spacingAndGlyphs" stroke="#111111" stroke-width="0.2">2023-03-15 00:30:48</text>
<text x="1375.40" y="507.30" font-size="15.41" font-weight="normal" fill="#111111" textLength="43.38" lengthAdjust="spacingAndGlyphs" stroke="#111111" stroke-width="0.2">admin</text>
<text x="1563.30" y="507.30" font-size="15.41" font-weight="normal" fill="#111111" textLength="52.43" lengthAdjust="spacingAndGlyphs" stroke="#111111" stroke-width="0.2">(empty)</text>
<text x="1726.90" y="507.30" font-size="15.41" font-weight="normal" fill="#111111" textLength="52.43" lengthAdjust="spacingAndGlyphs" stroke="#111111" stroke-width="0.2">(empty)</text>
<text x="495.91" y="562.20" font-size="15.41" font-weight="normal" fill="#111111" textLength="89.75" lengthAdjust="spacingAndGlyphs" stroke="#111111" stroke-width="0.2">Dmytro Haba</text>
<rect x="496.30" y="563" width="90.40" height="1" fill="#111111"/>
<text x="665.00" y="562.20" font-size="15.41" font-weight="normal" fill="#111111" textLength="52.43" lengthAdjust="spacingAndGlyphs" stroke="#111111" stroke-width="0.2">(empty)</text>
<text x="857.39" y="562.20" font-size="15.41" font-weight="normal" fill="#111111" textLength="44.28" lengthAdjust="spacingAndGlyphs" stroke="#111111" stroke-width="0.2">Ignore</text>
<text x="1207.10" y="562.20" font-size="15.41" font-weight="normal" fill="#111111" textLength="134.53" lengthAdjust="spacingAndGlyphs" stroke="#111111" stroke-width="0.2">2022-03-24 06:39:22</text>
<text x="1375.40" y="562.20" font-size="15.41" font-weight="normal" fill="#111111" textLength="41.57" lengthAdjust="spacingAndGlyphs" stroke="#111111" stroke-width="0.2">dhaba</text>
<text x="1563.30" y="562.20" font-size="15.41" font-weight="normal" fill="#111111" textLength="52.43" lengthAdjust="spacingAndGlyphs" stroke="#111111" stroke-width="0.2">(empty)</text>
<text x="1726.90" y="562.20" font-size="15.41" font-weight="normal" fill="#111111" textLength="52.43" lengthAdjust="spacingAndGlyphs" stroke="#111111" stroke-width="0.2">(empty)</text>
<text x="495.91" y="617.40" font-size="15.41" font-weight="normal" fill="#111111" textLength="102.14" lengthAdjust="spacingAndGlyphs" stroke="#111111" stroke-width="0.2">Dmytro Haba 1</text>
<rect x="496.30" y="618" width="101.80" height="1" fill="#111111"/>
<text x="665.00" y="617.40" font-size="15.41" font-weight="normal" fill="#111111" textLength="52.43" lengthAdjust="spacingAndGlyphs" stroke="#111111" stroke-width="0.2">(empty)</text>
<text x="857.39" y="617.40" font-size="15.41" font-weight="normal" fill="#111111" textLength="44.28" lengthAdjust="spacingAndGlyphs" stroke="#111111" stroke-width="0.2">Ignore</text>
<text x="1207.10" y="617.40" font-size="15.41" font-weight="normal" fill="#111111" textLength="134.53" lengthAdjust="spacingAndGlyphs" stroke="#111111" stroke-width="0.2">2022-03-24 08:17:06</text>
<text x="1375.40" y="617.40" font-size="15.41" font-weight="normal" fill="#111111" textLength="41.57" lengthAdjust="spacingAndGlyphs" stroke="#111111" stroke-width="0.2">dhaba</text>
<text x="1563.30" y="617.40" font-size="15.41" font-weight="normal" fill="#111111" textLength="52.43" lengthAdjust="spacingAndGlyphs" stroke="#111111" stroke-width="0.2">(empty)</text>
<text x="1726.90" y="617.40" font-size="15.41" font-weight="normal" fill="#111111" textLength="52.43" lengthAdjust="spacingAndGlyphs" stroke="#111111" stroke-width="0.2">(empty)</text>
<text x="495.93" y="659.85" font-size="15.41" font-weight="normal" fill="#111111" textLength="128.88" lengthAdjust="spacingAndGlyphs" stroke="#111111" stroke-width="0.2">New Update Set by</text>
<rect x="496.30" y="661" width="129.40" height="1" fill="#111111"/>
<text x="495.92" y="682.75" font-size="15.41" font-weight="normal" fill="#111111" textLength="33.55" lengthAdjust="spacingAndGlyphs" stroke="#111111" stroke-width="0.2">Luba</text>
<rect x="496.30" y="684" width="34.20" height="1" fill="#111111"/>
<text x="665.00" y="672.30" font-size="15.41" font-weight="normal" fill="#111111" textLength="43.21" lengthAdjust="spacingAndGlyphs" stroke="#111111" stroke-width="0.2">Global</text>
<rect x="664.40" y="673" width="44.00" height="1" fill="#111111"/>
<text x="858.40" y="672.30" font-size="15.41" font-weight="normal" fill="#111111" textLength="65.86" lengthAdjust="spacingAndGlyphs" stroke="#111111" stroke-width="0.2">Complete</text>
<text x="1207.10" y="672.30" font-size="15.41" font-weight="normal" fill="#111111" textLength="134.53" lengthAdjust="spacingAndGlyphs" stroke="#111111" stroke-width="0.2">2023-03-21 07:20:12</text>
<text x="1374.39" y="672.30" font-size="15.41" font-weight="normal" fill="#111111" textLength="148.17" lengthAdjust="spacingAndGlyphs" stroke="#111111" stroke-width="0.2">KaterynaBukhtiiarova</text>
<text x="1563.30" y="672.30" font-size="15.41" font-weight="normal" fill="#111111" textLength="52.43" lengthAdjust="spacingAndGlyphs" stroke="#111111" stroke-width="0.2">(empty)</text>
<text x="1726.90" y="672.30" font-size="15.41" font-weight="normal" fill="#111111" textLength="52.43" lengthAdjust="spacingAndGlyphs" stroke="#111111" stroke-width="0.2">(empty)</text>
<text x="495.92" y="726.40" font-size="15.41" font-weight="normal" fill="#111111" textLength="135.00" lengthAdjust="spacingAndGlyphs" stroke="#111111" stroke-width="0.2">Power BI Connector</text>
<rect x="496.30" y="727" width="135.10" height="1" fill="#111111"/>
<text x="665.00" y="726.40" font-size="15.41" font-weight="normal" fill="#111111" textLength="52.43" lengthAdjust="spacingAndGlyphs" stroke="#111111" stroke-width="0.2">(empty)</text>
<text x="857.39" y="726.40" font-size="15.41" font-weight="normal" fill="#111111" textLength="44.28" lengthAdjust="spacingAndGlyphs" stroke="#111111" stroke-width="0.2">Ignore</text>
<text x="1207.10" y="726.40" font-size="15.41" font-weight="normal" fill="#111111" textLength="134.53" lengthAdjust="spacingAndGlyphs" stroke="#111111" stroke-width="0.2">2022-03-25 04:56:10</text>
<text x="1375.40" y="726.40" font-size="15.41" font-weight="normal" fill="#111111" textLength="41.57" lengthAdjust="spacingAndGlyphs" stroke="#111111" stroke-width="0.2">dhaba</text>
<text x="1563.30" y="726.40" font-size="15.41" font-weight="normal" fill="#111111" textLength="52.43" lengthAdjust="spacingAndGlyphs" stroke="#111111" stroke-width="0.2">(empty)</text>
<text x="1726.90" y="726.40" font-size="15.41" font-weight="normal" fill="#111111" textLength="52.43" lengthAdjust="spacingAndGlyphs" stroke="#111111" stroke-width="0.2">(empty)</text>
<text x="496.90" y="781.10" font-size="15.41" font-weight="normal" fill="#111111" textLength="145.42" lengthAdjust="spacingAndGlyphs" stroke="#111111" stroke-width="0.2">System Administrator</text>
<rect x="496.30" y="782" width="146.50" height="1" fill="#111111"/>
<text x="665.00" y="769.65" font-size="15.41" font-weight="normal" fill="#111111" textLength="150.12" lengthAdjust="spacingAndGlyphs" stroke="#111111" stroke-width="0.2">Tableau Connector for</text>
<rect x="664.40" y="771" width="151.20" height="1" fill="#111111"/>
<text x="665.00" y="792.55" font-size="15.41" font-weight="normal" fill="#111111" textLength="79.25" lengthAdjust="spacingAndGlyphs" stroke="#111111" stroke-width="0.2">ServiceNow</text>
<rect x="664.40" y="794" width="81.30" height="1" fill="#111111"/>
<text x="857.43" y="781.10" font-size="15.41" font-weight="normal" fill="#111111" textLength="74.88" lengthAdjust="spacingAndGlyphs" stroke="#111111" stroke-width="0.2">In progress</text>
<text x="1207.10" y="781.10" font-size="15.41" font-weight="normal" fill="#111111" textLength="134.53" lengthAdjust="spacingAndGlyphs" stroke="#111111" stroke-width="0.2">2023-03-28 01:06:18</text>
<text x="1375.40" y="781.10" font-size="15.41" font-weight="normal" fill="#111111" textLength="43.38" lengthAdjust="spacingAndGlyphs" stroke="#111111" stroke-width="0.2">admin</text>
<text x="1563.30" y="781.10" font-size="15.41" font-weight="normal" fill="#111111" textLength="52.43" lengthAdjust="spacingAndGlyphs" stroke="#111111" stroke-width="0.2">(empty)</text>
<text x="1726.90" y="781.10" font-size="15.41" font-weight="normal" fill="#111111" textLength="52.43" lengthAdjust="spacingAndGlyphs" stroke="#111111" stroke-width="0.2">(empty)</text>
</svg>
</body></html>
